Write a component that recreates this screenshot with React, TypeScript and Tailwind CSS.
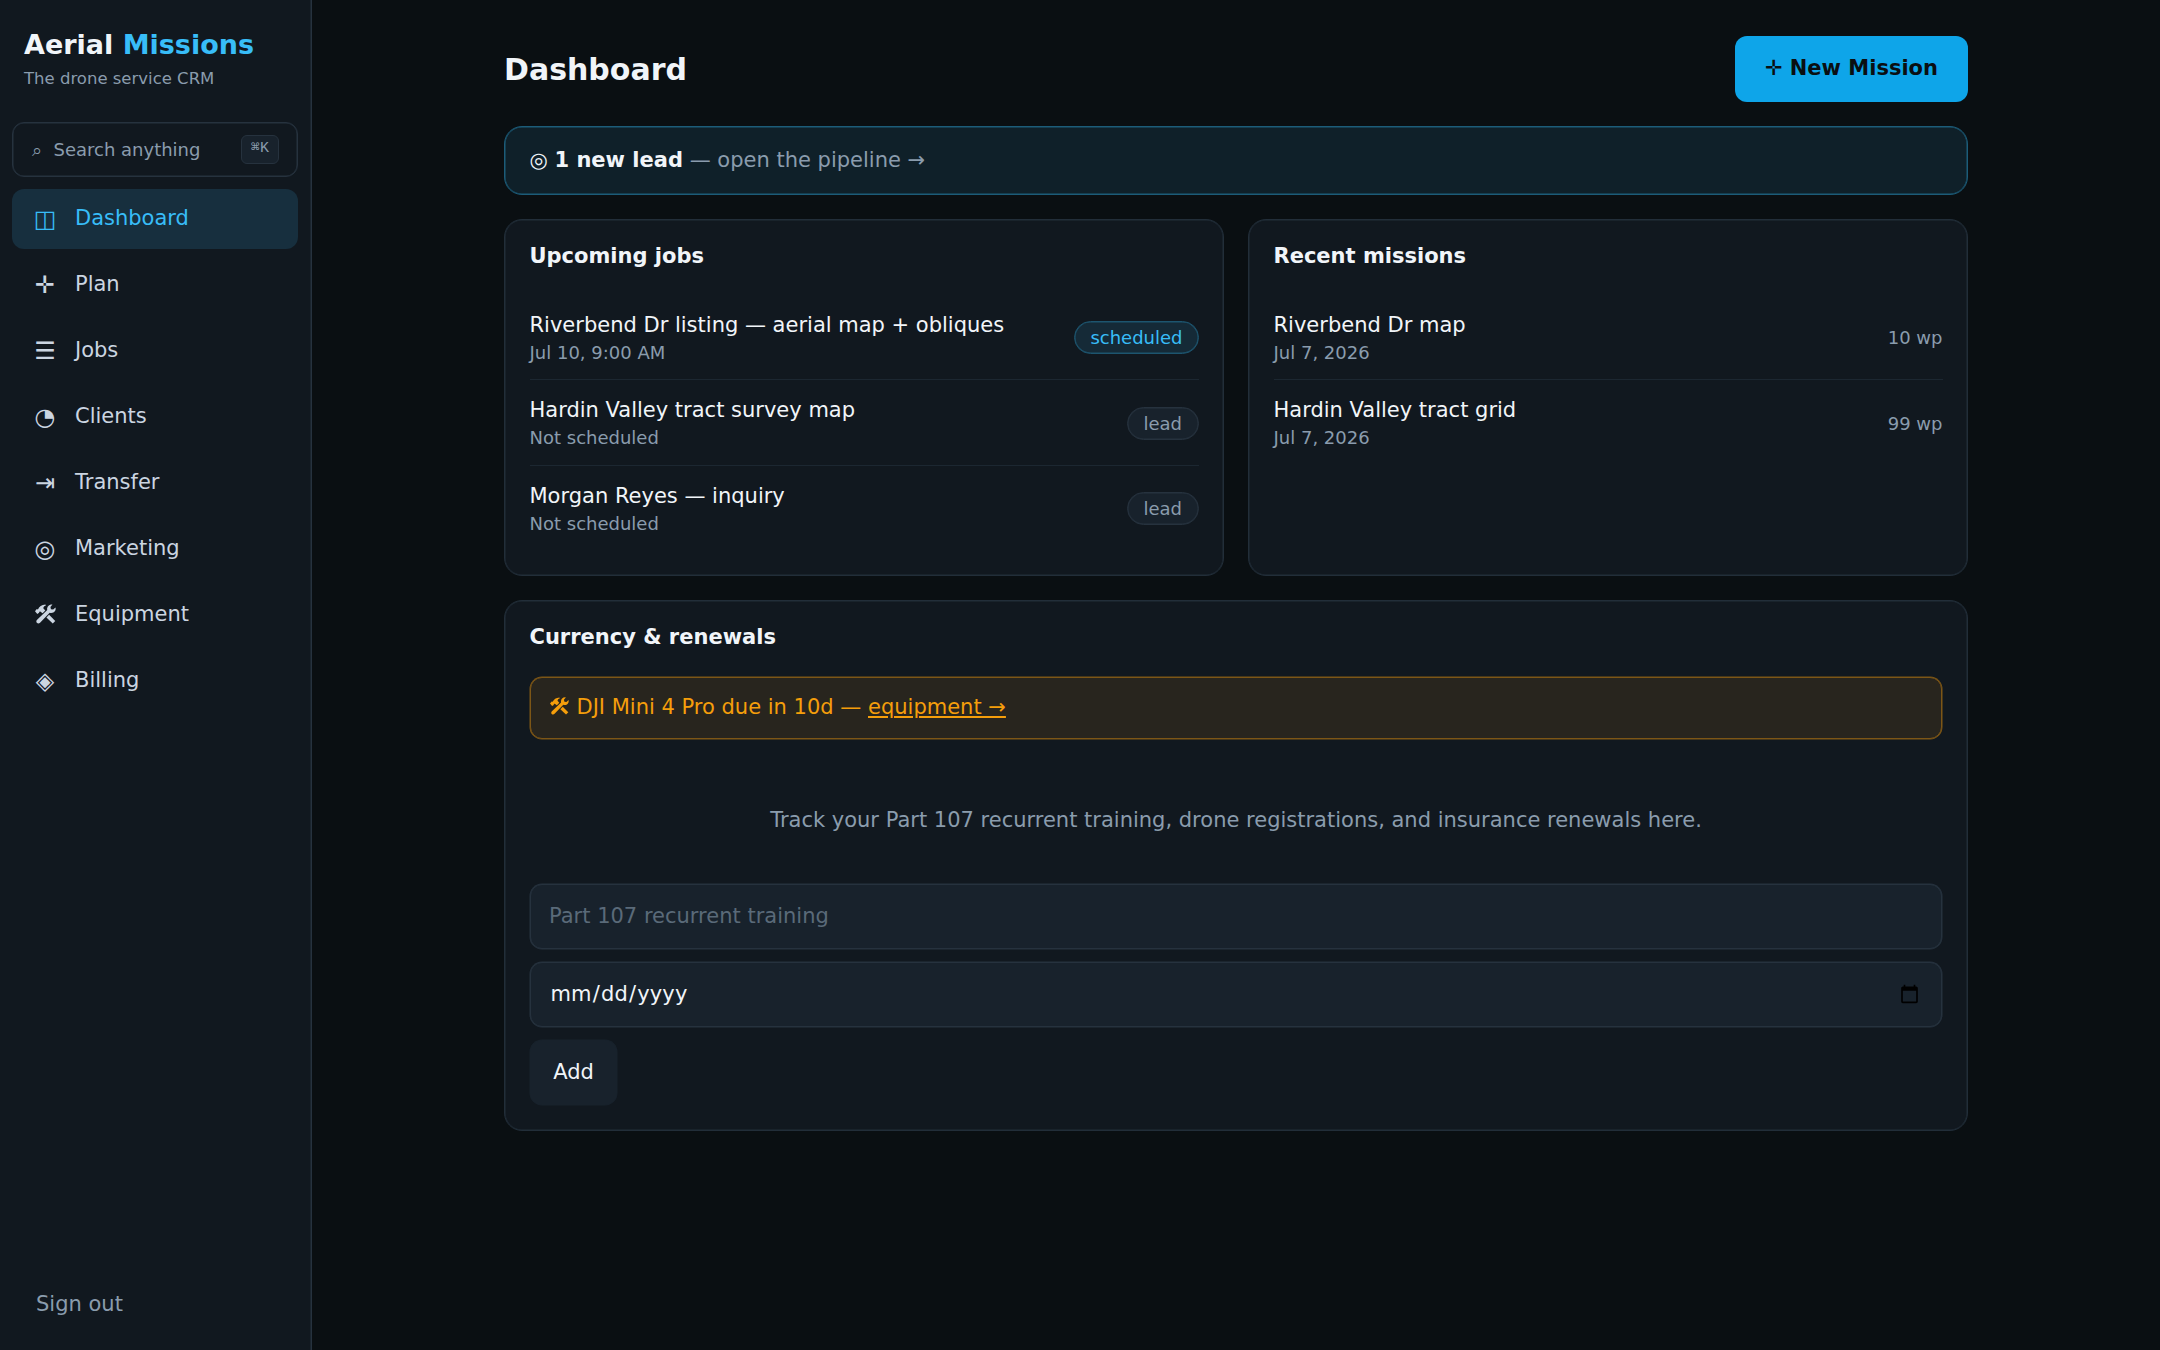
import React from "react";

function ToolsIcon({ className }: { className: string }) {
  return (
    <svg viewBox="0 0 20 19" className={className} fill="currentColor">
      <path d="M0 6.8 1.7 4.8 2.8 5.1C4 2.4 6.2 0.5 10 0.4L10.2 1.7C8.8 2 8.1 2.8 7.9 4L9.8 6.2 7.2 8.8 5 7 4.1 7.3 3.9 8.4 2.2 9.5Z" />
      <path d="M13.4 10.2 19.3 16.1 16.9 18.6 10.9 12.8Z" />
      <path d="M16.6 0.4 14.7 2.8 15.2 4.9 17.3 5.3 19.5 3.2C20.2 5.6 18.9 7.8 16.7 8.4 15.7 8.6 14.8 8.5 14 8.2L4.8 17.8C3.9 18.7 2.6 18.7 1.8 17.9 1 17.1 1.1 15.8 2 15L11.7 5.8C10.9 3.2 13.1 0 16.6 0.4Z" />
    </svg>
  );
}

const nav: { icon: React.ReactNode; label: string; active?: boolean }[] = [
  { icon: "◫", label: "Dashboard", active: true },
  { icon: "✛", label: "Plan" },
  { icon: "☰", label: "Jobs" },
  { icon: "◔", label: "Clients" },
  { icon: "⇥", label: "Transfer" },
  { icon: "◎", label: "Marketing" },
  { icon: <ToolsIcon className="mx-auto mb-[3px] h-5 w-[21px]" />, label: "Equipment" },
  { icon: "◈", label: "Billing" },
];

const jobs = [
  { title: "Riverbend Dr listing — aerial map + obliques", when: "Jul 10, 9:00 AM", status: "scheduled" },
  { title: "Hardin Valley tract survey map", when: "Not scheduled", status: "lead" },
  { title: "Morgan Reyes — inquiry", when: "Not scheduled", status: "lead" },
];

const missions = [
  { title: "Riverbend Dr map", when: "Jul 7, 2026", count: "10 wp" },
  { title: "Hardin Valley tract grid", when: "Jul 7, 2026", count: "99 wp" },
];

function Sidebar() {
  return (
    <aside className="flex w-[312px] shrink-0 flex-col border-r border-[#26323e] bg-[#11181f] shadow-[inset_-1px_0_0_#1b252e]">
      <div className="px-6 pt-[25px]">
        <div className="text-[27px] leading-[40px] font-bold text-[#f1f5f9]">
          Aerial <span className="text-[#38bdf8]">Missions</span>
        </div>
        <div className="pt-px text-[16.5px] leading-[25px] text-[#8a9cad]">The drone service CRM</div>
      </div>
      <button className="mt-[31px] mr-[13px] ml-3 flex h-[55px] items-center rounded-xl border border-[#26323e] pr-[18px] pl-[18.5px] text-[18px] text-[#8a9cad] shadow-[inset_0_0_0_0.5px_#26323e]">
        <span className="mr-3">⌕</span>
        <span>Search anything</span>
        <kbd className="ml-auto flex h-[29px] items-center rounded-md border border-[#26323e] bg-[#18222c] px-[9px] pb-px font-['Liberation_Mono','DejaVu_Sans_Mono',monospace] text-[15px]">
          ⌘K
        </kbd>
      </button>
      <nav className="mt-3 mr-[13px] ml-3 flex flex-col gap-1.5">
        {nav.map((n) => (
          <a
            key={n.label}
            className={
              n.active
                ? "flex h-[60px] items-center gap-[15px] rounded-xl bg-[#172f3e] px-[18px] text-[21px] text-[#38bdf8]"
                : "flex h-[60px] items-center gap-[15px] rounded-xl px-[18px] text-[21px] text-[#cbd5e1]"
            }
          >
            <span className="w-[30px] text-center text-[24px]">{n.icon}</span>
            <span>{n.label}</span>
          </a>
        ))}
      </nav>
      <div className="mt-auto px-9 pb-[30px] text-[21px] leading-[32px] text-[#8a9cad]">Sign out</div>
    </aside>
  );
}

function Card({ title, children, className = "" }: { title: string; children: React.ReactNode; className?: string }) {
  return (
    <section
      className={`rounded-[18px] border border-[#222e39] bg-[#11181f] px-[24.5px] py-6 shadow-[inset_0_0_0_0.5px_#222e39] ${className}`}
    >
      <h2 className="mb-[26px] text-[21px] leading-[25px] font-bold text-[#f1f5f9]">{title}</h2>
      {children}
    </section>
  );
}

function Row({ title, when, children }: { title: string; when: string; children: React.ReactNode }) {
  return (
    <div className="flex items-center justify-between border-b border-[#1c2731] pt-[15px] pb-3.5 last:border-b-0">
      <div>
        <div className="text-[21px] leading-[30px] text-[#f1f5f9]">{title}</div>
        <div className="text-[18px] leading-[25.35px] text-[#8a9cad]">{when}</div>
      </div>
      {children}
    </div>
  );
}

export default function App() {
  return (
    <div className="flex h-[1350px] w-[2160px] overflow-hidden bg-[#0a0f12] font-['DejaVu_Sans',sans-serif]">
      <Sidebar />
      <main className="flex flex-1 justify-center">
        <div className="w-[1464px] pt-9">
          <header className="flex h-[66px] items-center justify-between">
            <h1 className="text-[30px] font-bold text-[#f1f5f9]">Dashboard</h1>
            <button className="flex h-[66px] items-center rounded-xl bg-[#0ea5e9] pr-[30px] pl-[29.5px] text-[21px] font-bold text-[#0a0f12]">
              ✛ New Mission
            </button>
          </header>
          <div className="mt-6 flex h-[69px] items-center rounded-[18px] border border-[#1c5c79] bg-[#0f2029] px-[24.5px] text-[21px] text-[#8a9cad] shadow-[inset_0_0_0_0.5px_#1c5c79]">
            <div>
              <span className="text-[#f1f5f9]">◎ <b>1 new lead</b></span> — open the pipeline →
            </div>
          </div>
          <div className="mt-6 grid grid-cols-2 gap-6">
            <Card title="Upcoming jobs" className="h-[357px]">
              {jobs.map((j) => (
                <Row key={j.title} title={j.title} when={j.when}>
                  <span
                    className={
                      j.status === "scheduled"
                        ? "flex h-[33px] items-center rounded-full border border-[#1d556f] bg-[#152a37] px-[15px] text-[18px] text-[#38bdf8] shadow-[inset_0_0_0_0.5px_#1d556f]"
                        : "flex h-[33px] items-center rounded-full border border-[#26323e] bg-[#18222c] px-[15.5px] text-[18px] text-[#8a9cad] shadow-[inset_0_0_0_0.5px_#26323e]"
                    }
                  >
                    {j.status}
                  </span>
                </Row>
              ))}
            </Card>
            <Card title="Recent missions" className="h-[357px]">
              {missions.map((m) => (
                <Row key={m.title} title={m.title} when={m.when}>
                  <span className="text-[18px] text-[#8a9cad]">{m.count}</span>
                </Row>
              ))}
            </Card>
          </div>
          <Card title="Currency & renewals" className="mt-6 h-[531px]">
            <div className="mx-[0.5px] mt-[27px] flex h-[62px] items-center rounded-xl border border-[#7d5616] bg-[#28251e] px-[18.5px] text-[21px] text-[#f59e0b] shadow-[0_0_0_0.5px_#7d5616]">
              <div>
                <ToolsIcon className="mr-[8px] mb-[4px] inline h-[18px] w-[19px]" />
                DJI Mini 4 Pro due in 10d — <a className="underline">equipment →</a>
              </div>
            </div>
            <p className="pt-[66px] pb-[49px] text-center text-[21px] leading-[30px] text-[#8a9cad]">
              Track your Part 107 recurrent training, drone registrations, and insurance renewals here.
            </p>
            <div className="mx-[0.5px] flex flex-col items-start gap-[13px]">
              <input
                placeholder="Part 107 recurrent training"
                className="block h-[65px] w-full rounded-xl border border-[#26323e] bg-[#18222c] px-[18px] pb-0.5 text-[21px] text-[#f1f5f9] shadow-[0_0_0_0.5px_#26323e] placeholder:text-[#5a6a79]"
              />
              <input
                type="date"
                className="block h-[65px] w-full rounded-xl border border-[#26323e] bg-[#18222c] pr-[19.5px] pl-[18.5px] text-[21px] tracking-[0.15px] text-[#f1f5f9] shadow-[0_0_0_0.5px_#26323e]"
              />
              <button className="h-[65px] rounded-xl bg-[#18222c] px-[23.25px] text-[21px] text-[#f1f5f9] shadow-[0_0_0_0.5px_#18222c]">
                Add
              </button>
            </div>
          </Card>
        </div>
      </main>
    </div>
  );
}
